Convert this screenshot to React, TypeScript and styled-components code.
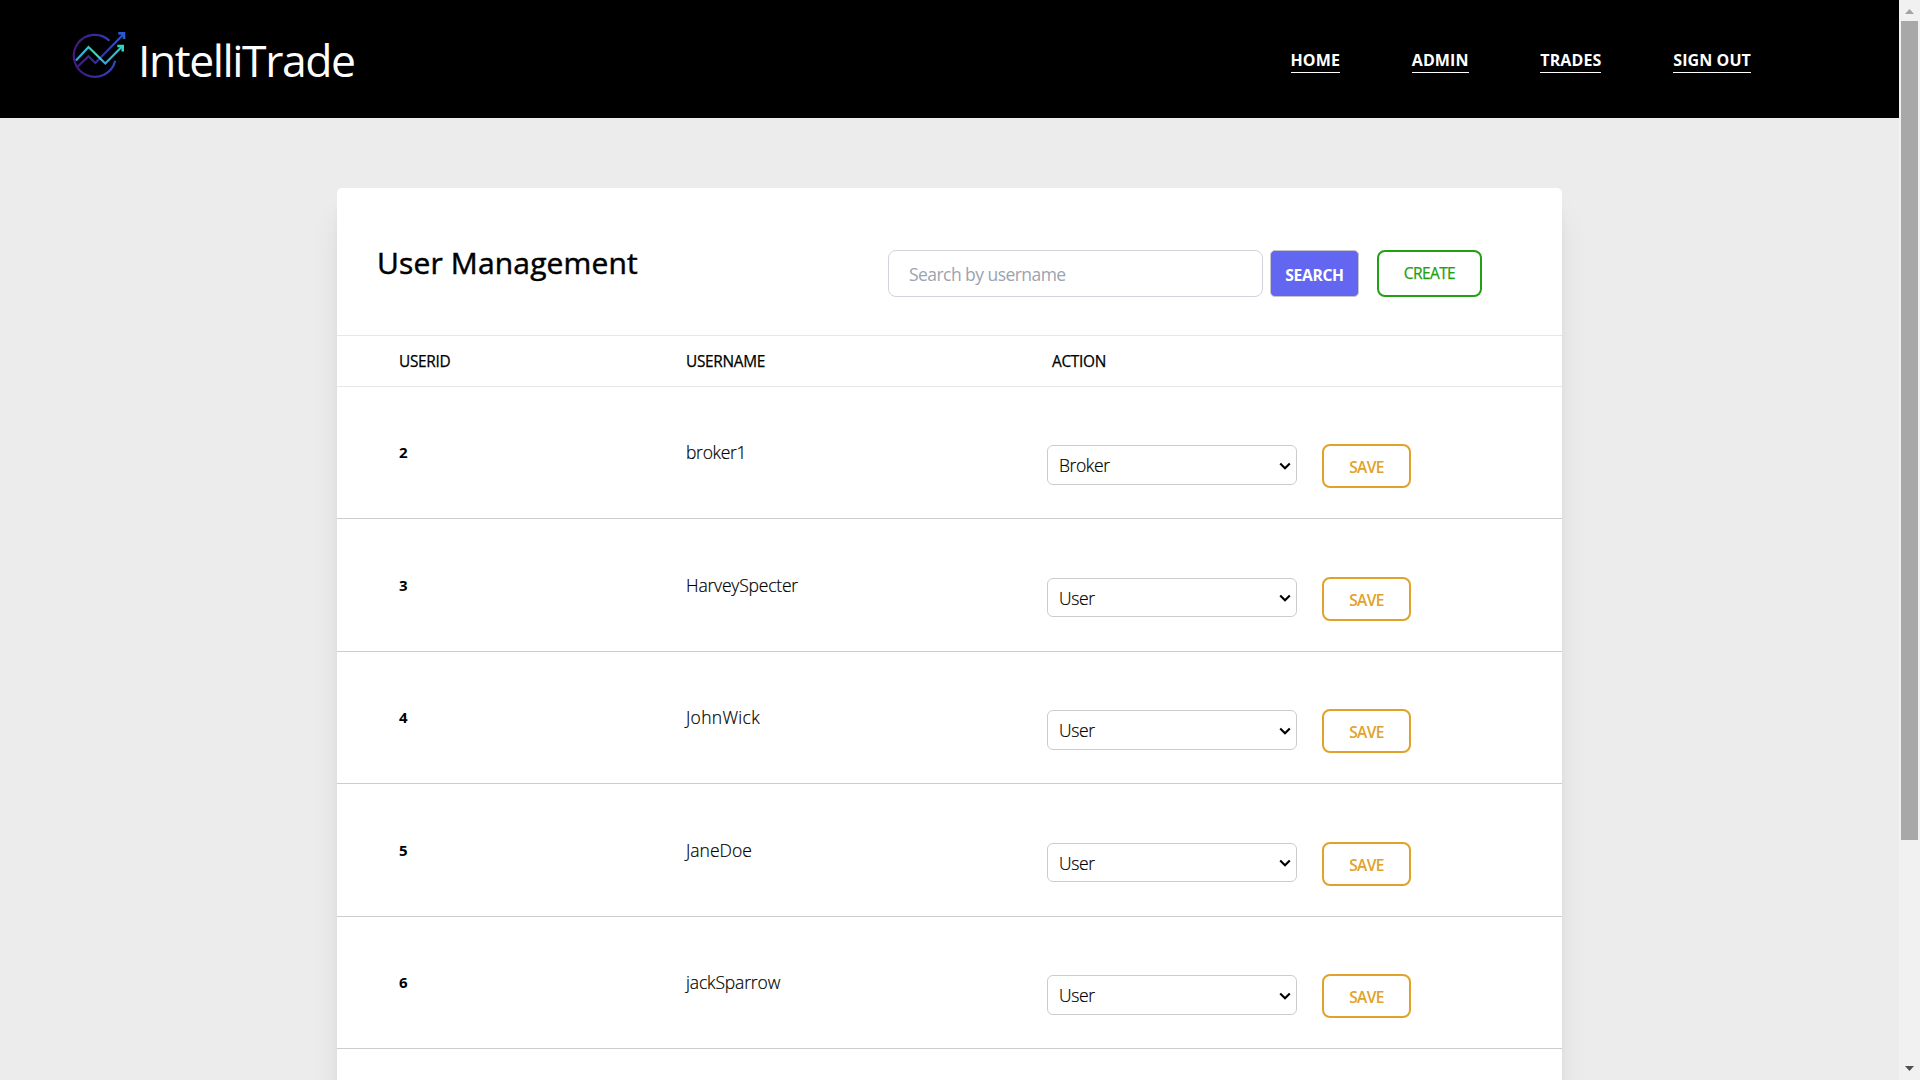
import React from "react";
import styled, { createGlobalStyle } from "styled-components";

const GlobalStyle = createGlobalStyle`
  *, *::before, *::after { box-sizing: border-box; }
  body {
    margin: 0;
    overflow: hidden;
    background: #ececec;
    color: #000;
    font-family: "Segoe UI", "Open Sans", "Noto Sans", sans-serif;
  }
  button, input, select { font-family: inherit; }
`;

const Screen = styled.div`
  display: flex;
  height: 1080px;
  overflow: hidden;
`;

const Page = styled.div`
  flex: 1;
  min-width: 0;
  display: flex;
  flex-direction: column;
  align-items: center;
`;

const Header = styled.header`
  align-self: stretch;
  flex: none;
  height: 118px;
  padding: 0 148px 0 72px;
  display: flex;
  justify-content: space-between;
  background: #000;
  color: #fff;
`;

const Brand = styled.div`
  display: flex;
  gap: 6px;
  padding-top: 30px;
`;

const BrandName = styled.span`
  font-size: 44.5px;
  line-height: 60px;
  letter-spacing: -1.45px;
`;

const Nav = styled.nav`
  display: flex;
  gap: 71.8px;
  padding-top: 49px;
`;

const NavLink = styled.a`
  height: 24px;
  border-bottom: 1px solid #fff;
  font-size: 16px;
  line-height: 22px;
  font-weight: 700;
  letter-spacing: 0.1px;
  white-space: nowrap;
`;

const Card = styled.main`
  flex: none;
  width: 1225px;
  height: 1000px;
  margin-top: 70px;
  border-radius: 5px;
  background: #fff;
  box-shadow: 0 25px 31px -6px rgba(0, 0, 0, 0.1), 0 10px 12px -7px rgba(0, 0, 0, 0.1);
`;

const Toolbar = styled.div`
  display: flex;
  justify-content: space-between;
  height: 147px;
  padding: 62px 80px 0 40px;
`;

const Title = styled.h1`
  margin: -7px 0 0;
  font-size: 30px;
  line-height: 40px;
  font-weight: 500;
  letter-spacing: 0.15px;
  -webkit-text-stroke: 0.5px #000;
`;

const Actions = styled.div`
  display: flex;
`;

const SearchInput = styled.input`
  width: 375px;
  height: 47px;
  padding: 0 20px;
  border: 1px solid #d1d5db;
  border-radius: 8px;
  font-size: 17.5px;
  letter-spacing: -0.55px;
  outline: none;
  &::placeholder { color: #9ca3af; opacity: 1; }
`;

const SearchButton = styled.button`
  width: 89px;
  height: 47px;
  margin-left: 7px;
  padding: 2px 0 0;
  border: 1px solid #c4c4cc;
  border-radius: 5px;
  background: #6366f1;
  color: #fff;
  font-size: 15.6px;
  font-weight: 700;
  letter-spacing: -0.3px;
`;

const CreateButton = styled.button`
  width: 105px;
  height: 47px;
  margin-left: 18px;
  padding: 0 0 2px;
  border: 2px solid #22a012;
  border-radius: 8px;
  background: #fff;
  color: #22a012;
  font-size: 15.5px;
  font-weight: 500;
  letter-spacing: -0.6px;
  -webkit-text-stroke: 0.25px #22a012;
`;

const columns = "287px 366px 1fr";

const TableHead = styled.div`
  display: grid;
  grid-template-columns: ${columns};
  height: 52px;
  padding: 1px 0 0 62px;
  border-top: 1px solid #e5e7eb;
  border-bottom: 1px solid #e5e7eb;
  font-size: 15.4px;
  line-height: 50px;
  font-weight: 500;
  letter-spacing: -0.3px;
  -webkit-text-stroke: 0.25px #000;
`;

const Row = styled.div<{ $even: boolean }>`
  display: grid;
  grid-template-columns: ${columns};
  height: ${(p) => (p.$even ? 133 : 132)}px;
  padding: ${(p) => (p.$even ? 1 : 0)}px 0 0 62px;
  border-bottom: 1px solid #ccc;
`;

const UserId = styled.span`
  padding-top: 53px;
  font-size: 15px;
  line-height: 24px;
  font-weight: 700;
`;

const UserName = styled.span<{ $spacing: number }>`
  padding-top: 53px;
  font-size: 17.5px;
  line-height: 25px;
  font-weight: 300;
  letter-spacing: ${(p) => p.$spacing}px;
  -webkit-text-stroke: 0.2px #000;
`;

const RowActions = styled.div`
  display: flex;
  align-items: flex-start;
  gap: 25px;
  padding-top: 57px;
  margin-left: -5px;
`;

const SelectWrap = styled.div`
  position: relative;
  display: flex;
  margin-top: 1px;
`;

const RoleSelect = styled.select<{ $even: boolean }>`
  appearance: none;
  width: 250px;
  height: ${(p) => (p.$even ? 39 : 40)}px;
  padding: 0 11px;
  border: 1px solid #ccc;
  border-radius: 6px;
  background: #fff;
  color: #000;
  font-size: 17.5px;
  font-weight: 300;
  letter-spacing: -0.4px;
  -webkit-text-stroke: 0.2px #000;
`;

const Chevron = styled.svg<{ $even: boolean }>`
  position: absolute;
  right: 6px;
  top: ${(p) => (p.$even ? 16 : 17)}px;
  pointer-events: none;
`;

const SaveButton = styled.button`
  width: 89px;
  height: 44px;
  padding: 1px 0 0;
  border: 2px solid #e0a22a;
  border-radius: 8px;
  background: #fff;
  color: #e0a22a;
  font-size: 15.5px;
  font-weight: 600;
  letter-spacing: -0.6px;
`;

const Scrollbar = styled.aside`
  flex: none;
  width: 21px;
  display: flex;
  flex-direction: column;
  align-items: center;
  padding-bottom: 9px;
  justify-content: space-between;
  background: #f1f1f1;
`;

const ScrollTop = styled.div`
  display: flex;
  flex-direction: column;
  align-items: center;
  gap: 7px;
  padding-top: 9px;
`;

const Thumb = styled.div`
  width: 17px;
  height: 819px;
  background: #a8a8a8;
`;

const Arrow = styled.i<{ $down?: boolean }>`
  width: 9px;
  height: 5px;
  background: ${(p) => (p.$down ? "#505050" : "#a3a3a3")};
  clip-path: ${(p) =>
    p.$down ? "polygon(0 0, 100% 0, 50% 100%)" : "polygon(50% 0, 100% 100%, 0 100%)"};
`;

function Logo() {
  return (
    <svg width="60" height="50" viewBox="0 0 60 50" fill="none" strokeWidth="2.2">
      <defs>
        <linearGradient id="ring" gradientUnits="userSpaceOnUse" x1="0" y1="0" x2="54" y2="0">
          <stop offset="0" stopColor="#441880" />
          <stop offset="0.45" stopColor="#352ba0" />
          <stop offset="1" stopColor="#2a5cd0" />
        </linearGradient>
        <linearGradient id="teal" gradientUnits="userSpaceOnUse" x1="3" y1="0" x2="52" y2="0">
          <stop offset="0" stopColor="#35a0e6" />
          <stop offset="0.25" stopColor="#2fc3d2" />
          <stop offset="0.45" stopColor="#38e8a8" />
          <stop offset="0.6" stopColor="#34a5e8" />
          <stop offset="1" stopColor="#2dd4bf" />
        </linearGradient>
      </defs>
      <path d="M37.5 10.8A21 21 0 1 0 43.2 30.8" stroke="url(#ring)" />
      <path d="M6 36.2L16.5 26.3L23.3 33L51.5 4.2" stroke="url(#ring)" />
      <path d="M46.3 3.4H52V9" stroke="#2a5cd0" strokeWidth="2.6" />
      <path d="M4 30.6L16.5 17L33.3 33.5L50 16.6" stroke="url(#teal)" />
      <path d="M45.3 16H50.7V21.4" stroke="#2dd4bf" strokeWidth="2.6" />
    </svg>
  );
}

const links = ["HOME", "ADMIN", "TRADES", "SIGN OUT"];

const users = [
  { id: 2, name: "broker1", role: "Broker", spacing: -0.3 },
  { id: 3, name: "HarveySpecter", role: "User", spacing: -0.2 },
  { id: 4, name: "JohnWick", role: "User", spacing: 0.3 },
  { id: 5, name: "JaneDoe", role: "User", spacing: 0 },
  { id: 6, name: "jackSparrow", role: "User", spacing: -0.15 },
];

export default function App() {
  return (
    <Screen>
      <GlobalStyle />
      <Page>
        <Header>
          <Brand>
            <Logo />
            <BrandName>IntelliTrade</BrandName>
          </Brand>
          <Nav>
            {links.map((label) => (
              <NavLink key={label}>{label}</NavLink>
            ))}
          </Nav>
        </Header>
        <Card>
          <Toolbar>
            <Title>User Management</Title>
            <Actions>
              <SearchInput placeholder="Search by username" />
              <SearchButton>SEARCH</SearchButton>
              <CreateButton>CREATE</CreateButton>
            </Actions>
          </Toolbar>
          <TableHead>
            <span>USERID</span>
            <span>USERNAME</span>
            <span>ACTION</span>
          </TableHead>
          {users.map((u, i) => (
            <Row key={u.id} $even={i % 2 === 1}>
              <UserId>{u.id}</UserId>
              <UserName $spacing={u.spacing}>{u.name}</UserName>
              <RowActions>
                <SelectWrap>
                  <RoleSelect $even={i % 2 === 1} defaultValue={u.role}>
                    <option>User</option>
                    <option>Broker</option>
                  </RoleSelect>
                  <Chevron $even={i % 2 === 1} width="12" height="9" viewBox="0 0 12 9" fill="none">
                    <path d="M1.2 1.5L6 6.3L10.8 1.5" stroke="#000" strokeWidth="2.1" />
                  </Chevron>
                </SelectWrap>
                <SaveButton>SAVE</SaveButton>
              </RowActions>
            </Row>
          ))}
        </Card>
      </Page>
      <Scrollbar>
        <ScrollTop>
          <Arrow />
          <Thumb />
        </ScrollTop>
        <Arrow $down />
      </Scrollbar>
    </Screen>
  );
}
